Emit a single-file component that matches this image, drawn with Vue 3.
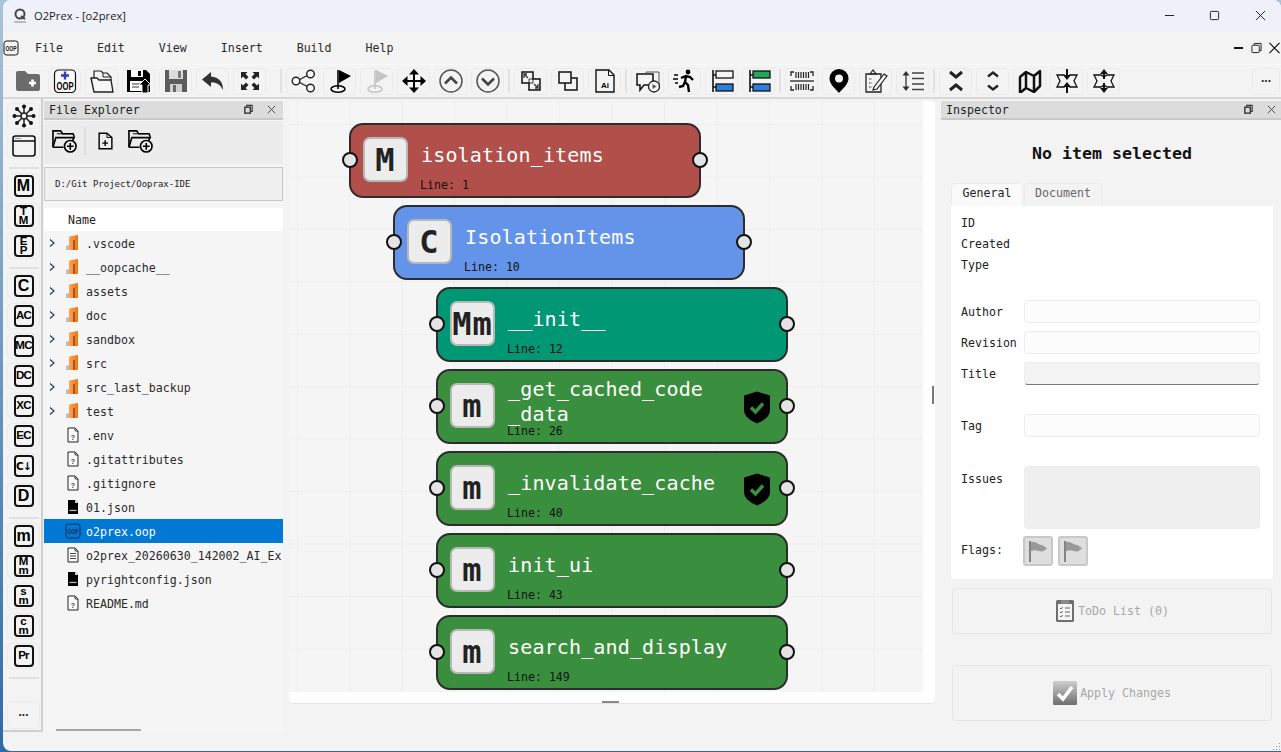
<template>
  <div class="desktop">
    <div class="window">
      <div class="titlebar">
        <svg class="logo" viewBox="0 0 16 16">
          <circle cx="8" cy="6" r="4.500" fill="none" stroke="#444" stroke-width="2" />
          <path d="M9 8l4 3" stroke="#444" stroke-width="2" />
          <path d="M2 13h12v2H2z" fill="#bbb" />
        </svg>
        <span class="app-title">O2Prex - [o2prex]</span>
        <div class="win-controls">
          <button class="win-btn"><svg viewBox="0 0 12 12"><path d="M1 6h10" stroke="#111" /></svg></button>
          <button class="win-btn"><svg viewBox="0 0 12 12"><rect x="1.500" y="1.500" width="9" height="9" rx="1" fill="none" stroke="#111" /></svg></button>
          <button class="win-btn"><svg viewBox="0 0 12 12"><path d="M1 1l10 10M11 1L1 11" stroke="#111" /></svg></button>
        </div>
      </div>

      <div class="menubar">
        <svg class="menu-logo" viewBox="0 0 16 16" v-html="icons.oopFile"></svg>
        <nav class="menu-items">
          <span v-for="item in menus" :key="item">{{ item }}</span>
        </nav>
        <div class="mdi-controls">
          <svg viewBox="0 0 12 12"><path d="M1 6h10" stroke="#000" stroke-width="2" /></svg>
          <svg viewBox="0 0 12 12"><path d="M3.500 2.500V1h7.500v8H9.500" fill="none" stroke="#111" /><rect x="1" y="3" width="8" height="8" rx="1" fill="none" stroke="#111" /></svg>
          <svg viewBox="0 0 12 12"><path d="M.5.5l11 11M11.500.5l-11 11" stroke="#000" stroke-width="1.200" /></svg>
        </div>
      </div>

      <div class="toolbar">
        <template v-for="(tool, i) in tools" :key="i">
          <span v-if="tool === '|' || tool === '||'" :class="['tool-sep', { wide: tool === '||' }]"></span>
          <button v-else :class="['tool-btn', { plain: tool === 'folderAdd' }]">
            <svg viewBox="0 0 24 24" v-html="icons[tool]"></svg>
          </button>
        </template>
        <button class="tool-btn more">...</button>
      </div>

      <div class="workspace">
        <aside class="sidebar">
          <template v-for="(group, g) in sideGroups" :key="g">
            <button v-for="btn in group" :key="btn.id" class="side-btn">
              <svg v-if="btn.icon" viewBox="0 0 24 24" v-html="icons[btn.icon]"></svg>
              <span v-else :class="['side-glyph', btn.cls]">
                <span v-for="part in btn.label" :key="part">{{ part }}</span>
              </span>
            </button>
            <span class="side-sep"></span>
          </template>
          <button class="side-btn side-more">...</button>
        </aside>

        <section class="explorer">
          <header class="dock-title">
            <span>File Explorer</span>
            <span class="dock-actions">
              <svg viewBox="0 0 12 12"><path d="M4 3V1.500h6V8H8.500" fill="none" stroke="#333" stroke-width="1.200" /><rect x="2" y="3.500" width="6" height="6.500" fill="none" stroke="#333" stroke-width="1.500" /></svg>
              <svg viewBox="0 0 12 12"><path d="M2 2l8 8M10 2l-8 8" stroke="#444" /></svg>
            </span>
          </header>
          <div class="explorer-tools">
            <svg viewBox="0 0 26 26" v-html="icons.folderPlus"></svg>
            <span class="explorer-sep"></span>
            <svg class="small" viewBox="0 0 24 24" v-html="icons.filePlus"></svg>
            <svg viewBox="0 0 26 26" v-html="icons.folderPlus"></svg>
          </div>
          <div class="path-box">D:/Git Project/Ooprax-IDE</div>
          <div class="tree-head">Name</div>
          <ul class="tree">
            <li v-for="file in files" :key="file.name" :class="['tree-row', { selected: file.selected }]">
              <span class="chevron">
                <svg v-if="file.type === 'folder'" viewBox="0 0 8 10"><path d="M2 1.500L6 5 2 8.500" fill="none" stroke="#2a3a66" stroke-width="1.200" /></svg>
              </span>
              <svg class="file-icon" viewBox="0 0 16 16" v-html="icons[file.type]"></svg>
              <span class="file-name">{{ file.name }}</span>
            </li>
          </ul>
          <div class="hscroll"></div>
        </section>

        <section class="canvas-frame">
          <div class="canvas">
            <div
              v-for="node in nodes"
              :key="node.name"
              :class="['node', node.kind]"
              :style="{ left: node.x + 'px', top: node.y + 'px' }"
            >
              <span class="port port-in"></span>
              <span class="node-icon">{{ node.badge }}</span>
              <span class="node-name">{{ node.name }}</span>
              <svg v-if="node.shield" class="shield" viewBox="0 0 28 32">
                <path d="M14 0l13 4v14c0 7-6 11-13 14C7 29 1 25 1 18V4z" fill="#000" />
                <path d="M8 16l4.500 4.500L20 12" fill="none" stroke="#3a8f3e" stroke-width="3.500" />
              </svg>
              <span class="node-line">Line: {{ node.line }}</span>
              <span class="port port-out"></span>
            </div>
          </div>
          <span class="grip-v"></span>
          <span class="grip-h"></span>
        </section>

        <section class="inspector">
          <header class="dock-title">
            <span>Inspector</span>
            <span class="dock-actions">
              <svg viewBox="0 0 12 12"><path d="M4 3V1.500h6V8H8.500" fill="none" stroke="#333" stroke-width="1.200" /><rect x="2" y="3.500" width="6" height="6.500" fill="none" stroke="#333" stroke-width="1.500" /></svg>
              <svg viewBox="0 0 12 12"><path d="M2 2l8 8M10 2l-8 8" stroke="#444" /></svg>
            </span>
          </header>
          <div class="inspector-body">
            <h2>No item selected</h2>
            <div class="tabs">
              <span class="tab active">General</span>
              <span class="tab">Document</span>
            </div>
            <div class="tab-panel">
              <div class="info-row">ID</div>
              <div class="info-row">Created</div>
              <div class="info-row">Type</div>

              <label class="field first"><span>Author</span><input type="text" /></label>
              <label class="field"><span>Revision</span><input type="text" /></label>
              <label class="field"><span>Title</span><input class="title-input" type="text" disabled /></label>
              <label class="field spaced"><span>Tag</span><input type="text" /></label>
              <label class="field spaced top"><span>Issues</span><textarea disabled></textarea></label>

              <div class="flags">
                <span>Flags:</span>
                <button v-for="n in 2" :key="n" class="flag-btn">
                  <svg viewBox="0 0 24 24"><path d="M4 2v21" stroke="#666" stroke-width="1.500" /><path d="M5 3c5-1 7 3 11 3l5 3c-2 3-5 4-8 3s-5-1-8 0z" fill="#999" /></svg>
                </button>
              </div>
            </div>

            <button class="wide-btn todo">
              <svg viewBox="0 0 20 24" v-html="icons.todo"></svg>
              <span>ToDo List (0)</span>
            </button>
            <button class="wide-btn apply">
              <svg viewBox="0 0 24 24" v-html="icons.apply"></svg>
              <span>Apply Changes</span>
            </button>
          </div>
        </section>
      </div>
      <svg class="size-grip" viewBox="0 0 9 9">
        <path d="M7 1h1v1H7zM4 4h1v1H4zM7 4h1v1H7zM1 7h1v1H1zM4 7h1v1H4zM7 7h1v1H7z" fill="#999" />
      </svg>
    </div>
  </div>
</template>

<script setup>
const menus = ['File', 'Edit', 'View', 'Insert', 'Build', 'Help']

const tools = [
  'folderAdd', 'oopNew', 'open', 'saveUp', 'saveGrey', 'undo', 'expand', '||',
  'share', 'flagBlack', 'flagGrey', 'move', 'up', 'down', '|',
  'resizeIn', 'overlap', 'aiFile', '|',
  'chatPlay', 'runner', 'alignBlue', 'alignGreen', '|',
  'barcode', 'pin', 'note', 'lineHeight', '|',
  'collapse', 'unfold', 'map', 'starIn', 'starOut'
]

const glyph = (id, label, cls = '') => ({ id, label, cls })

const sideGroups = [
  [{ id: 'graph', icon: 'graph' }, { id: 'win', icon: 'browser' }],
  [glyph('m1', ['M']), glyph('tm', ['T', 'M'], 'stack'), glyph('ep', ['E', 'P'], 'stack')],
  [
    glyph('c', ['C']), glyph('ac', ['AC'], 'two'), glyph('mc', ['MC'], 'two'), glyph('dc', ['DC'], 'two'),
    glyph('xc', ['XC'], 'two'), glyph('ec', ['EC'], 'two'), glyph('cd', ['C↓'], 'two arrow'), glyph('d', ['D'])
  ],
  [
    glyph('lm', ['m']), glyph('mm', ['M', 'm'], 'stack'), glyph('sm', ['s', 'm'], 'stack'),
    glyph('cm', ['c', 'm'], 'stack'), glyph('pr', ['Pr'], 'two')
  ]
]

const files = [
  { name: '.vscode', type: 'folder' },
  { name: '__oopcache__', type: 'folder' },
  { name: 'assets', type: 'folder' },
  { name: 'doc', type: 'folder' },
  { name: 'sandbox', type: 'folder' },
  { name: 'src', type: 'folder' },
  { name: 'src_last_backup', type: 'folder' },
  { name: 'test', type: 'folder' },
  { name: '.env', type: 'unknown' },
  { name: '.gitattributes', type: 'unknown' },
  { name: '.gitignore', type: 'unknown' },
  { name: '01.json', type: 'json' },
  { name: 'o2prex.oop', type: 'oopFile', selected: true },
  { name: 'o2prex_20260630_142002_AI_Ex', type: 'text' },
  { name: 'pyrightconfig.json', type: 'json' },
  { name: 'README.md', type: 'unknown' }
]

const nodes = [
  { name: 'isolation_items', badge: 'M', kind: 'module', line: 1, x: 60, y: 22 },
  { name: 'IsolationItems', badge: 'C', kind: 'class', line: 10, x: 104, y: 104 },
  { name: '__init__', badge: 'Mm', kind: 'magic', line: 12, x: 147, y: 186 },
  { name: '_get_cached_code\n_data', badge: 'm', kind: 'method', line: 26, x: 147, y: 268, shield: true },
  { name: '_invalidate_cache', badge: 'm', kind: 'method', line: 40, x: 147, y: 350, shield: true },
  { name: 'init_ui', badge: 'm', kind: 'method', line: 43, x: 147, y: 432 },
  { name: 'search_and_display', badge: 'm', kind: 'method', line: 149, x: 147, y: 514 }
]

const label = 'font-family="Liberation Sans" font-weight="700" text-anchor="middle"'

const icons = {
  folderAdd: '<path d="M0 4a2 2 0 0 1 2-2h7l3 3h10a2 2 0 0 1 2 2v13a2 2 0 0 1-2 2H2a2 2 0 0 1-2-2z" fill="#6b6b6b"/><path d="M13 14h7M16.500 10.500v7" stroke="#fff" stroke-width="2.600"/>',
  oopNew: `<rect x="1.500" y="1" width="21" height="22.500" rx="4" fill="#fafafa" stroke="#111" stroke-width="1.200"/><path d="M12 2.500v8M8 6.500h8" stroke="#2c3fb5" stroke-width="2.400"/><text x="12" y="20.500" font-size="10" textLength="17" lengthAdjust="spacingAndGlyphs" ${label}>OOP</text>`,
  open: '<path d="M4 9V2h7l2 2h4l4 4v3" fill="none" stroke="#222" stroke-width="1.200"/><path d="M13 4v4h8" fill="none" stroke="#222" stroke-width="1"/><path d="M1 9h6l2 2h12l2 12H4z" fill="#f6f6f6" stroke="#222" stroke-width="1.400" stroke-linejoin="round"/>',
  saveUp: '<path d="M0 1h19l4 4v18H0z" fill="#000"/><path d="M4 1h12v7H4z" fill="#fff"/><path d="M11 2h3v5h-3z" fill="#000"/><path d="M3 12h13v10H3z" fill="#fff"/><path d="M5 15h8M5 18h7" stroke="#333"/><path d="M12 16l6-6 6 6h-3v8h-6v-8z" fill="#000" stroke="#f4f4f4"/>',
  saveGrey: '<path d="M1 1h22v22H1z" fill="#5c5c5c"/><path d="M5 1h14v9H5z" fill="#dcdcdc"/><path d="M14 2h3v7h-3z" fill="#777"/><path d="M6 15h12v8H6z" fill="#cfcfcf"/><path d="M9 16h3v7H9z" fill="#666"/>',
  undo: '<path d="M10 3L1 10.500 10 18v-4.500c5-.5 9 1.500 12 7.500 0-8-4-13-12-13.500z" fill="#333"/>',
  expand: '<path d="M3 3h6.500L7.500 5l3 3-2.500 2.500-3-3L3 9.500zM21 3v6.500l-2-2-3 3L13.500 8l3-3-2-2zM3 21v-6.500l2 2 3-3L10.500 16l-3 3 2 2zM21 21h-6.500l2-2-3-3 2.500-2.500 3 3 2-2z" fill="#222"/>',
  share: '<g fill="#f7f7f7" stroke="#222" stroke-width="1.400"><path d="M6 12l13-7M6 12l13 7" fill="none"/><circle cx="5" cy="12" r="3.800"/><circle cx="19.500" cy="5" r="3.800"/><circle cx="19.500" cy="19" r="3.800"/></g>',
  flagBlack: '<path d="M10 1v19" stroke="#000" stroke-width="1.600"/><path d="M11 1l12 6-12 7z" fill="#000"/><ellipse cx="10" cy="20" rx="7" ry="3.200" fill="none" stroke="#000" stroke-width="1.500"/>',
  flagGrey: '<path d="M10 1v19" stroke="#c4c4c4" stroke-width="1.600"/><path d="M11 1l12 6-12 7z" fill="#c4c4c4"/><ellipse cx="10" cy="20" rx="7" ry="3.200" fill="none" stroke="#c4c4c4" stroke-width="1.500"/>',
  move: '<path d="M12 2v20M2 12h20" stroke="#000" stroke-width="2"/><path d="M12 0l5 5.500H7zM12 24l5-5.500H7zM0 12l5.500-5v10zM24 12l-5.500-5v10z" fill="#000"/>',
  up: '<circle cx="12" cy="12" r="11" fill="none" stroke="#555" stroke-width="1.500"/><path d="M6 14.500L12 8.500l6 6" fill="none" stroke="#444" stroke-width="2.600"/>',
  down: '<circle cx="12" cy="12" r="11" fill="none" stroke="#555" stroke-width="1.500"/><path d="M6 9.500l6 6 6-6" fill="none" stroke="#444" stroke-width="2.600"/>',
  resizeIn: '<path d="M3 3h11v7h7v11H10v-7H3z" fill="none" stroke="#111" stroke-width="1.500"/><path d="M10 10h4v4h-4z" fill="none" stroke="#111" stroke-width=".8"/><path d="M5 5l4 4M5 9V5h3M19 19l-4-4M19 15v4h-3" fill="none" stroke="#333" stroke-width="1.300"/>',
  overlap: '<path d="M3 3h12v11H3zM9 14v7h12V9h-6" fill="none" stroke="#111" stroke-width="1.500"/>',
  aiFile: `<path d="M3 1h13l5 5v17H3z" fill="none" stroke="#111" stroke-width="1.400"/><path d="M15.500 1v5.500H21" fill="none" stroke="#111"/><text x="12" y="18.500" font-size="8" ${label}>Ai</text>`,
  chatPlay: '<path d="M1 5h16v11H8l-4 5v-5H1z" fill="none" stroke="#111" stroke-width="1.500"/><path d="M10 5V3h13v13" fill="none" stroke="#555"/><circle cx="18" cy="17.500" r="5.500" fill="#f4f4f4" stroke="#222" stroke-width="1.300"/><path d="M16.500 15l4 2.500-4 2.500z" fill="#555"/>',
  runner: '<circle cx="15" cy="3" r="2.400" fill="#000"/><path d="M8 9l5-2 4 1 3 3M13 7l-1 6 3 3 1 7M12 13l-2 4-4 1" fill="none" stroke="#000" stroke-width="2.400"/><path d="M1 6h4M0 10h5M2 14h3" stroke="#000" stroke-width="1.400"/>',
  alignBlue: '<path d="M3 1v22M3 6h3M3 18h3" stroke="#111" stroke-width="1.600"/><rect x="6" y="2" width="17" height="7" fill="#f5f5f5" stroke="#111" stroke-width="1.300"/><rect x="6" y="15" width="17" height="7" fill="#2d7fdc" stroke="#111" stroke-width="1.300"/>',
  alignGreen: '<path d="M3 1v22M3 6h3M3 18h3" stroke="#111" stroke-width="1.600"/><rect x="6" y="2" width="17" height="7" fill="#1fa85a" stroke="#111" stroke-width="1.300"/><rect x="6" y="15" width="17" height="7" fill="#2d7fdc" stroke="#111" stroke-width="1.300"/>',
  barcode: '<path d="M1 7V3h3M20 3h3v4M1 17v4h3M20 21h3v-4" fill="none" stroke="#222" stroke-width="1.300"/><path d="M0 12h24" stroke="#222" stroke-width="1.300"/><path d="M6 3v6M8.500 3v6M11 3v6M13.500 3v6M16 3v6M18.500 3v6M6 15v6M8.500 15v6M11 15v6M13.500 15v6M16 15v6M18.500 15v6" stroke="#222" stroke-width="1.200"/>',
  pin: '<path fill-rule="evenodd" d="M12 0a9.500 9.500 0 0 1 9.500 9.500C21.500 16 14 21 12 24c-2-3-9.500-8-9.500-14.500A9.500 9.500 0 0 1 12 0zm0 5.500a4 4 0 1 0 0 8 4 4 0 0 0 0-8z" fill="#000"/>',
  note: '<path d="M2 5h15v18H2z" fill="none" stroke="#222" stroke-width="1.300"/><path d="M6 5l3-4 3 4z" fill="none" stroke="#222" stroke-width="1.200"/><path d="M5 10h3M5 14h3M5 18h3" stroke="#333" stroke-dasharray="1.500 1"/><path d="M10 18l10-13 3 2-10 13-4 1z" fill="#f5f5f5" stroke="#222" stroke-width="1.200"/>',
  lineHeight: '<path d="M5 4v16" stroke="#333" stroke-width="1.300"/><path d="M5 2l3.500 4.500h-7zM5 22l3.500-4.500h-7z" fill="#333"/><path d="M11 4h12M11 9.500h12M11 15h12M11 20.500h12" stroke="#444" stroke-width="1.400"/>',
  collapse: '<path d="M6 3l6 5 6-5M6 21l6-5 6 5" fill="none" stroke="#222" stroke-width="3"/>',
  unfold: '<path d="M7 7.500l5-4 5 4M7 16.500l5 4 5-4" fill="none" stroke="#222" stroke-width="2.400"/>',
  map: '<path d="M2 8l6-5 8 4 6-5v15l-6 6-8-4-6 5zM8 3v15M16 7v16" fill="none" stroke="#111" stroke-width="2.500" stroke-linejoin="round"/>',
  starIn: '<path d="M2 6h7l3 2 3-2h7l-3 6 3 6h-7l-3-2-3 2H2l3-6z" fill="none" stroke="#111" stroke-width="1.300"/><path d="M12 0v7M12 17v7" stroke="#111" stroke-width="2"/><path d="M8 6h8l-4 5zM8 18h8l-4-5z" fill="#111"/>',
  starOut: '<path d="M2 6h7l3 2 3-2h7l-3 6 3 6h-7l-3-2-3 2H2l3-6z" fill="none" stroke="#111" stroke-width="1.300"/><path d="M12 4v6M12 14v6" stroke="#111" stroke-width="2"/><path d="M8 5h8l-4-5zM8 19h8l-4 5z" fill="#111"/>',
  graph: '<g stroke="#222" stroke-width="1.500"><path d="M12 12L12 3M12 12L19 5M12 12L21 12M12 12L19 19M12 12L12 21M12 12L5 19M12 12L3 12M12 12L5 5"/></g><circle cx="12" cy="12" r="3" fill="#f5f5f5" stroke="#222" stroke-width="1.500"/><g fill="#111"><circle cx="12" cy="2.500" r="2"/><circle cx="19" cy="5" r="2"/><circle cx="21.500" cy="12" r="2"/><circle cx="19" cy="19" r="2"/><circle cx="12" cy="21.500" r="2"/><circle cx="5" cy="19" r="2"/><circle cx="2.500" cy="12" r="2"/><circle cx="5" cy="5" r="2"/></g>',
  browser: '<rect x="1" y="2" width="22" height="20" rx="2.500" fill="none" stroke="#111" stroke-width="1.600"/><path d="M1 7h22" stroke="#111" stroke-width="1.500"/><path d="M3.500 4.500h5" stroke="#444" stroke-dasharray="1 1"/>',
  folderPlus: '<path d="M1 20V3h8l2 3h11l1 3" fill="none" stroke="#000" stroke-width="1.700"/><path d="M5 6h15" stroke="#000" stroke-width="1"/><path d="M1 20l3-10h19l-2 4" fill="none" stroke="#000" stroke-width="1.700"/><path d="M1 20h11" stroke="#000" stroke-width="1.700"/><circle cx="19" cy="19" r="6" fill="#ececec" stroke="#000" stroke-width="1.700"/><path d="M15.500 19h7M19 15.500v7" stroke="#000" stroke-width="1.700"/>',
  filePlus: '<path d="M3 1h11l7 6v16H3z" fill="none" stroke="#000" stroke-width="2"/><path d="M14 1v6h7" fill="none" stroke="#000" stroke-width="1.300"/><path d="M7.500 15h8M11.500 11v8" stroke="#000" stroke-width="2"/>',
  folder: '<defs><linearGradient id="fo" x1="0" x2="1"><stop offset="0" stop-color="#ffa35a"/><stop offset="1" stop-color="#ee7410"/></linearGradient></defs><path d="M1 11l3-1v5H1z" fill="#bdbdbd"/><path d="M4 1.500L13 0v15H4z" fill="url(#fo)"/><path d="M9 5v10" stroke="#6d3a10" stroke-width="1.200"/>',
  unknown: `<path d="M3 1h7l3 3v11H3z" fill="#fafafa" stroke="#222"/><path d="M10 1v3h3" fill="none" stroke="#222" stroke-width=".8"/><text x="8" y="12.500" font-size="7" fill="#444" ${label}>?</text>`,
  json: '<path d="M3 1h7l3 3v11H3z" fill="#000"/><path d="M10 1v3h3z" fill="#ddd"/><rect x="4.500" y="10.800" width="7" height="1.300" fill="#bbb"/>',
  oopFile: `<rect x="1" y="1" width="14" height="14" rx="2.500" fill="none" stroke="currentColor" stroke-width="1"/><text x="8" y="11" font-size="7" fill="currentColor" textLength="11" lengthAdjust="spacingAndGlyphs" ${label}>OOP</text>`,
  text: '<path d="M3 1h7l3 3v11H3z" fill="#fafafa" stroke="#222"/><path d="M10 1v3h3M5 6.500h6M5 9h6M5 11.500h6" fill="none" stroke="#333" stroke-width=".9"/>',
  todo: '<rect x="1" y="1" width="18" height="22" rx="1.500" fill="#6f6f6f"/><rect x="3" y="5" width="14" height="16" fill="#f4f4f4"/><rect x="6" y="1" width="8" height="4" fill="#8a8a8a"/><path d="M5 9l1 1 1.500-2M5 13l1 1 1.500-2M5 17l1 1 1.500-2M10 9h5M10 13h5M10 17h5" fill="none" stroke="#666"/>',
  apply: '<defs><linearGradient id="ap" x1="0" x2="0" y1="0" y2="1"><stop offset="0" stop-color="#cfcfcf"/><stop offset="1" stop-color="#6e6e6e"/></linearGradient></defs><rect width="24" height="24" rx="1.500" fill="url(#ap)"/><path d="M5 13l5 5 9-12" fill="none" stroke="#fff" stroke-width="3.600"/>'
}
</script>

<style scoped>
.desktop {
  width: 1281px;
  height: 752px;
  overflow: hidden;
  background: linear-gradient(180deg, #a9c3d8, #2f6aa6);
}

.window {
  position: relative;
  display: flex;
  flex-direction: column;
  width: 1278px;
  height: 751px;
  margin-left: 3px;
  overflow: hidden;
  border-radius: 8px 8px 0 8px;
  background: #f3f3f3;
  color: #222;
  font-family: "DejaVu Sans Mono", monospace;
  font-size: 11.6px;
}

button {
  padding: 0;
  font-family: inherit;
  background: none;
}

svg {
  display: block;
}

.titlebar {
  display: flex;
  align-items: center;
  flex: 0 0 31px;
  background: #eef2f8;
}

.logo {
  width: 16px;
  height: 16px;
  margin: 0 6px 0 9px;
}

.app-title {
  font-family: "Open Sans", sans-serif;
  font-size: 11.2px;
  color: #1c1c1c;
}

.win-controls {
  display: flex;
  margin-left: auto;
  margin-right: -2px;
}

.win-btn {
  display: flex;
  align-items: center;
  justify-content: center;
  width: 45.500px;
  height: 30px;
  border: none;
}

.win-btn svg {
  width: 11px;
  height: 11px;
}

.menubar {
  display: flex;
  align-items: center;
  flex: 0 0 33px;
  border-bottom: 1px solid #f8f8f8;
}

.menu-logo {
  width: 16px;
  height: 16px;
  color: #111;
}

.menu-items {
  display: flex;
  gap: 34px;
  margin-left: 16px;
  color: #2a2a2a;
}

.mdi-controls {
  display: flex;
  align-items: center;
  gap: 7px;
  margin-left: auto;
  margin-right: 1px;
}

.mdi-controls svg {
  width: 11px;
  height: 12px;
}

.toolbar {
  display: flex;
  align-items: center;
  gap: 4px;
  flex: 0 0 32px;
  padding-left: 8px;
}

.tool-btn {
  display: flex;
  align-items: center;
  justify-content: center;
  width: 33px;
  height: 27px;
  border: 1px solid #ebebeb;
  border-radius: 5px;
}

.tool-btn.plain {
  border-color: transparent;
}

.tool-btn svg {
  width: 24px;
  height: 24px;
}

.tool-btn.more {
  width: 28px;
  margin-left: auto;
  margin-right: 1px;
  padding-bottom: 6px;
  color: #222;
  font-family: "Liberation Sans", sans-serif;
  font-size: 12px;
  font-weight: 700;
}

.tool-sep {
  width: 2px;
  height: 24px;
  background: #e2e2e2;
}

.tool-sep.wide {
  margin-left: 10px;
}

.workspace {
  display: flex;
  flex: 1;
  min-height: 0;
  border-top: 2px solid #d8d8d8;
}

.sidebar {
  display: flex;
  flex-direction: column;
  gap: 4px;
  width: 40px;
  height: 633px;
  box-sizing: border-box;
  padding: 4px 0 0 4px;
  border-right: 2px solid #cfcfcf;
  border-bottom: 2px solid #cfcfcf;
}

.side-btn {
  display: flex;
  align-items: center;
  justify-content: center;
  flex: 0 0 26px;
  width: 33px;
  border: 1px solid #ebebeb;
  border-radius: 5px;
}

.side-btn svg {
  width: 24px;
  height: 24px;
}

.side-sep {
  width: 30px;
  height: 2px;
  margin: 4px 0 0 2px;
  background: #e0e0e0;
}

.side-more {
  flex-basis: 28px;
  margin-top: 18px;
  padding-bottom: 6px;
  color: #222;
  font-family: "Liberation Sans", sans-serif;
  font-size: 12px;
  font-weight: 700;
}

.side-glyph {
  display: flex;
  flex-direction: column;
  align-items: center;
  justify-content: center;
  width: 16px;
  height: 18px;
  overflow: hidden;
  border: 2px solid #111;
  border-radius: 4px;
  color: #000;
  font-family: "Liberation Sans", sans-serif;
  font-size: 16px;
  font-weight: 700;
  line-height: 1;
}

.side-glyph.two {
  font-size: 11.500px;
  letter-spacing: -0.8px;
}

.side-glyph.arrow {
  font-family: "DejaVu Sans", sans-serif;
  font-size: 10.500px;
}

.side-glyph.stack {
  font-size: 11.500px;
  line-height: 9px;
}

.explorer {
  display: flex;
  flex-direction: column;
  width: 239px;
  height: 633px;
  margin-left: 1px;
  background: #f5f5f5;
}

.dock-title {
  display: flex;
  align-items: center;
  justify-content: space-between;
  flex: 0 0 19px;
  box-sizing: border-box;
  margin-top: 2px;
  padding: 0 6px 0 5px;
  background: #dcdcdc;
  border-bottom: 2px solid #c8c8c8;
  color: #222;
}

.dock-actions {
  display: flex;
  gap: 12px;
}

.dock-actions svg {
  width: 11px;
  height: 11px;
}

.explorer-tools {
  display: flex;
  align-items: center;
  flex: 0 0 43px;
  margin-top: 1px;
  padding: 0 0 4px 8px;
  box-sizing: border-box;
  background: #ececec;
}

.explorer-tools svg {
  width: 25px;
  height: 25px;
}

.explorer-tools svg.small {
  width: 17px;
  height: 20px;
  margin-right: 14px;
}

.explorer-sep {
  width: 2px;
  height: 28px;
  margin: 0 11px 0 7px;
  background: #dedede;
}

.path-box {
  display: flex;
  align-items: center;
  flex: 0 0 34px;
  box-sizing: border-box;
  margin-top: 3px;
  padding-left: 10px;
  border: 1px solid #c8c8c8;
  background: #f0f0f0;
  font-size: 9px;
}

.tree-head {
  display: flex;
  align-items: center;
  flex: 0 0 23px;
  margin-top: 7px;
  padding-left: 24px;
  background: #fff;
}

.tree {
  flex: 1;
  margin: 0;
  padding: 0;
  list-style: none;
  overflow: hidden;
}

.tree-row {
  display: flex;
  align-items: center;
  height: 24px;
  white-space: nowrap;
  color: #2a2a2a;
}

.tree-row.selected {
  background: #0078d4;
  color: #fff;
}

.chevron {
  flex: 0 0 21px;
  padding-left: 4px;
  box-sizing: border-box;
}

.chevron svg {
  width: 8px;
  height: 10px;
}

.file-icon {
  flex: 0 0 16px;
  width: 16px;
  height: 16px;
  color: #0b2a52;
}

.file-name {
  margin-left: 5px;
  padding-top: 2px;
}

.hscroll {
  flex: 0 0 2px;
  width: 85px;
  margin: 0 0 1px 12px;
  background: #a6a6a6;
}

.canvas-frame {
  position: relative;
  width: 646px;
  height: 603px;
  box-sizing: border-box;
  margin: 2px 0 0 6px;
  padding: 0 12px 12px 0;
  background: #fff;
  border-bottom: 1px solid #e4e4e4;
  border-radius: 0 4px 4px 4px;
}

.canvas {
  position: relative;
  width: 634px;
  height: 591px;
  overflow: hidden;
  background-color: #f5f5f5;
  background-image:
    linear-gradient(90deg, #ededed 1px, transparent 1px),
    linear-gradient(#ededed 1px, transparent 1px);
  background-size: 52.450px 52.450px;
  background-position: 8px 23px;
}

.grip-v {
  position: absolute;
  top: 285px;
  right: 1px;
  width: 2px;
  height: 18px;
  background: #777;
}

.grip-h {
  position: absolute;
  bottom: 0;
  left: 313px;
  width: 17px;
  height: 2px;
  background: #888;
}

.node {
  position: absolute;
  display: flex;
  align-items: center;
  width: 352px;
  height: 75px;
  box-sizing: border-box;
  padding-left: 12px;
  border: 2px solid #2c2c2c;
  border-radius: 14px;
  color: #fff;
}

.node.module { background: #b1504a; }
.node.class { background: #6494ea; }
.node.magic { background: #009874; }
.node.method { background: #3a8f3e; }

.node-icon {
  display: flex;
  align-items: center;
  justify-content: center;
  flex: 0 0 45px;
  height: 45px;
  margin-bottom: 2px;
  box-sizing: border-box;
  border: 2px solid #b8b8b8;
  border-radius: 7px;
  background: #ececec;
  color: #222;
  font-size: 32px;
  font-weight: 700;
  white-space: nowrap;
  letter-spacing: 1px;
}

.node-name {
  margin: 0 0 10px 13px;
  font-size: 20px;
  line-height: 25px;
  letter-spacing: 0.15px;
  white-space: pre;
}

.shield {
  width: 28px;
  height: 33px;
  margin: 2px 15px 0 auto;
}

.node-line {
  position: absolute;
  left: 69px;
  bottom: 3px;
  color: #111;
  line-height: 16px;
}

.port {
  position: absolute;
  top: 27px;
  width: 12px;
  height: 12px;
  border: 2px solid #111;
  border-radius: 50%;
  background: #e4e4e4;
}

.port-in { left: -9px; }
.port-out { right: -9px; }

.inspector {
  display: flex;
  flex-direction: column;
  flex: 1;
  margin-left: 6px;
}

.inspector .dock-title {
  padding-right: 4px;
}

.inspector-body {
  padding: 0 8px 0 10px;
}

h2 {
  margin: 21px 0 0;
  font-size: 16.600px;
  line-height: 26px;
  font-weight: 700;
  text-align: center;
  color: #111;
}

.tabs {
  display: flex;
  gap: 1px;
  margin-top: 16px;
}

.tab {
  display: flex;
  align-items: center;
  justify-content: center;
  width: 72px;
  height: 23px;
  box-sizing: border-box;
  padding-bottom: 4px;
  border: 1px solid #ebebeb;
  border-bottom: none;
  border-radius: 4px 4px 0 0;
  color: #666;
}

.tab + .tab {
  width: 78px;
}

.tab.active {
  background: #fafafa;
  color: #222;
}

.tab-panel {
  height: 373px;
  box-sizing: border-box;
  padding: 7px 13px 0 10px;
  border-radius: 0 0 3px 3px;
  background: #fff;
}

.info-row {
  height: 21px;
  line-height: 21px;
}

.field {
  display: flex;
  align-items: center;
  height: 23px;
  margin-top: 8px;
}

.field.first {
  margin-top: 24px;
}

.field.spaced {
  margin-top: 29px;
}

.field.top {
  align-items: flex-start;
  height: 63px;
  line-height: 26px;
}

.field span {
  flex: 0 0 63px;
}

.field input,
.field textarea {
  flex: 1;
  min-width: 0;
  box-sizing: border-box;
  height: 100%;
  margin: 0;
  border: 1px solid #ececec;
  border-radius: 4px;
  background: #fcfcfc;
  outline: none;
  resize: none;
}

.field .title-input {
  background: #f3f3f3;
  border-bottom-color: #777;
}

.field textarea {
  background: #efefef;
}

.flags {
  display: flex;
  align-items: center;
  gap: 5px;
  margin-top: 7px;
}

.flags span {
  flex: 0 0 57px;
  padding-bottom: 2px;
}

.flag-btn {
  display: flex;
  align-items: center;
  justify-content: center;
  width: 30px;
  height: 30px;
  border: 2px solid #c8c8c8;
  border-radius: 3px;
  background: #dedede;
}

.flag-btn svg {
  width: 24px;
  height: 24px;
}

.wide-btn {
  display: flex;
  align-items: center;
  justify-content: center;
  gap: 3px;
  width: 320px;
  margin-left: 1px;
  border: 1px solid #e6e6e6;
  border-radius: 4px;
  color: #a8a8a8;
  font-size: 11.600px;
}

.wide-btn.todo {
  height: 46px;
  margin-top: 9px;
}

.wide-btn.apply {
  height: 56px;
  margin-top: 31px;
}

.wide-btn svg {
  width: 20px;
  height: 24px;
}

.wide-btn.apply svg {
  width: 24px;
}

.size-grip {
  position: absolute;
  right: 0;
  bottom: 0;
  width: 9px;
  height: 9px;
}
</style>

<style>
html,
body {
  margin: 0;
  background: #2f6aa6;
}
</style>
